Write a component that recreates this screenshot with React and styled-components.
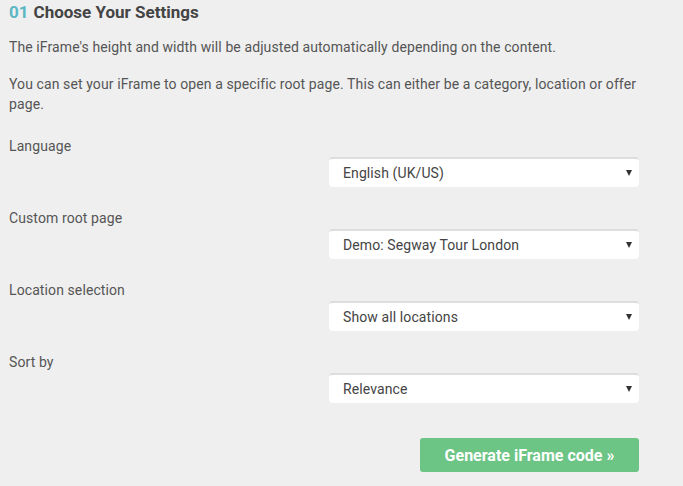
import React from "react"
import styled, { createGlobalStyle } from "styled-components"

const GlobalStyle = createGlobalStyle`
  body {
    margin: 0;
    background: #efefef;
    font-family: Roboto, "Liberation Sans", sans-serif;
    color: #555;
  }
`

const Wrapper = styled.div`
  width: 630px;
  padding: 2px 0 0 9px;
`

const Title = styled.h2`
  margin: 0;
  font-size: 17px;
  line-height: 20px;
  font-weight: 700;
  color: #444;
`

const Step = styled.span`
  color: #5bb7c4;
  margin-right: 5px;
`

const Text = styled.p`
  margin: ${p => p.$top || 0}px -6px 0 0;
  font-size: 14px;
  line-height: 20px;
  letter-spacing: 0.1px;
`

const Field = styled.div`
  display: flex;
  flex-direction: column;
  margin-top: ${p => p.$top || 21}px;
`

const Label = styled.label`
  font-size: 14px;
  line-height: 20px;
  letter-spacing: 0.1px;
`

const SelectBox = styled.div`
  position: relative;
  align-self: flex-end;
  width: 310px;
  height: 30px;
  margin-top: 1px;
  box-sizing: border-box;
  background: #fff;
  border-top: 2px solid #dedede;
  border-radius: 4px;
  font-size: 14px;
  line-height: 28px;
  letter-spacing: 0.1px;
  padding: 0 14px;
  color: #444;
`

const Arrow = styled.span`
  position: absolute;
  right: 7px;
  top: 11px;
  width: 0;
  height: 0;
  border-left: 3px solid transparent;
  border-right: 3px solid transparent;
  border-top: 6px solid #333;
`

const Actions = styled.div`
  display: flex;
  justify-content: flex-end;
  margin-top: 35px;
`

const Button = styled.button`
  width: 219px;
  height: 34px;
  border: none;
  border-radius: 3px;
  background: #6cc485;
  color: #fff;
  font-family: Roboto, "Liberation Sans", sans-serif;
  font-size: 16px;
  font-weight: 700;
  cursor: pointer;
`

const fields = [
  ["Language", "English (UK/US)"],
  ["Custom root page", "Demo: Segway Tour London"],
  ["Location selection", "Show all locations"],
  ["Sort by", "Relevance"],
]

export default function App() {
  return (
    <Wrapper>
      <GlobalStyle />
      <Title>
        <Step>01</Step>Choose Your Settings
      </Title>
      <Text $top={15}>
        The iFrame's height and width will be adjusted automatically depending on the content.
      </Text>
      <Text $top={17}>
        You can set your iFrame to open a specific root page. This can either be a category, location or offer page.
      </Text>
      {fields.map(([label, value], i) => (
        <Field key={label} $top={i === 0 ? 22 : 21}>
          <Label>{label}</Label>
          <SelectBox>
            {value}
            <Arrow />
          </SelectBox>
        </Field>
      ))}
      <Actions>
        <Button>Generate iFrame code »</Button>
      </Actions>
    </Wrapper>
  )
}
